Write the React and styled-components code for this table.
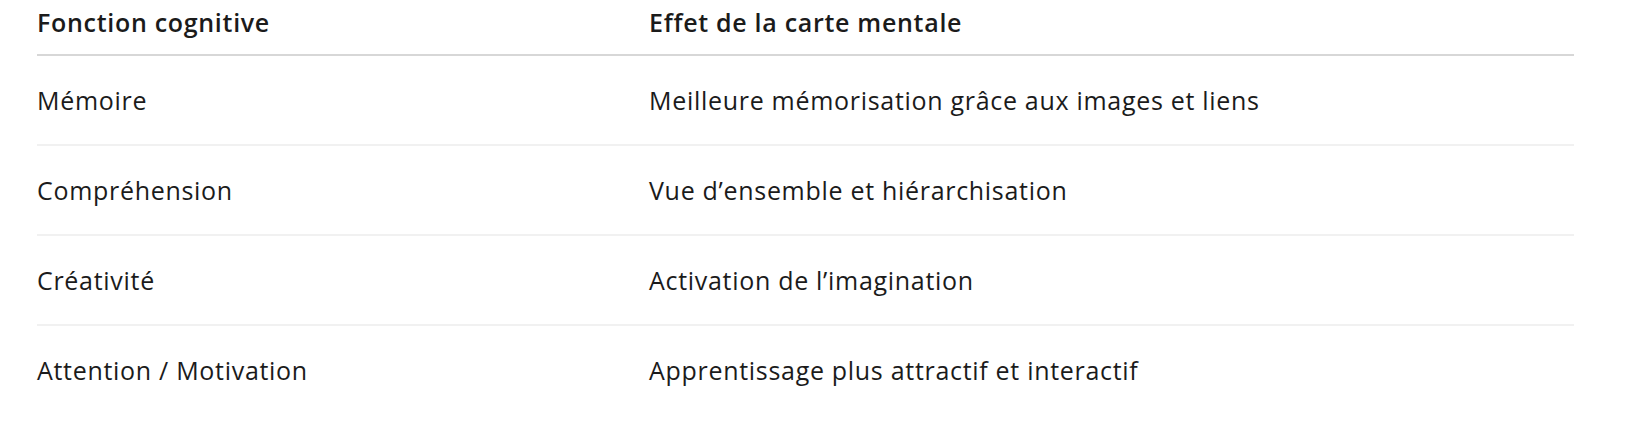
import React from "react";
import styled, { createGlobalStyle } from "styled-components";

const GlobalStyle = createGlobalStyle`
body {
  margin: 0;
  background: #ffffff;
  font-family: "Open Sans", "Noto Sans", sans-serif;
  color: #1b1b1b;
}
`;

const rows = [
  ["Mémoire", "Meilleure mémorisation grâce aux images et liens"],
  ["Compréhension", "Vue d’ensemble et hiérarchisation"],
  ["Créativité", "Activation de l’imagination"],
  ["Attention / Motivation", "Apprentissage plus attractif et interactif"],
];

const Page = styled.div`
padding: 0 78px 0 37px;
`;

const Table = styled.table`
width: 100%;
border-collapse: collapse;
table-layout: fixed;
font-size: 25px;
letter-spacing: 0.7px;
line-height: 34px;
`;

const HeadCell = styled.th`
text-align: left;
font-weight: 600;
padding: 5px 0 15px 0;
border-bottom: 2px solid #d7d7d7;
width: ${(props) => props.width || "auto"};
`;

const Row = styled.tr`
border-bottom: ${(props) => (props.last ? "none" : "2px solid #f1f1f1")};
`;

const Cell = styled.td`
font-weight: 400;
padding: 27px 0 27px 0;
`;

export default function App() {
    return (
        <Page>
            <GlobalStyle />
            <Table>
                <thead>
                    <tr>
                        <HeadCell width="612px">Fonction cognitive</HeadCell>
                        <HeadCell>Effet de la carte mentale</HeadCell>
                    </tr>
                </thead>
                <tbody>
                    {rows.map(([fn, effect], i) => (
                        <Row key={fn} last={i === rows.length - 1}>
                            <Cell>{fn}</Cell>
                            <Cell>{effect}</Cell>
                        </Row>
                    ))}
                </tbody>
            </Table>
        </Page>
    );
}
